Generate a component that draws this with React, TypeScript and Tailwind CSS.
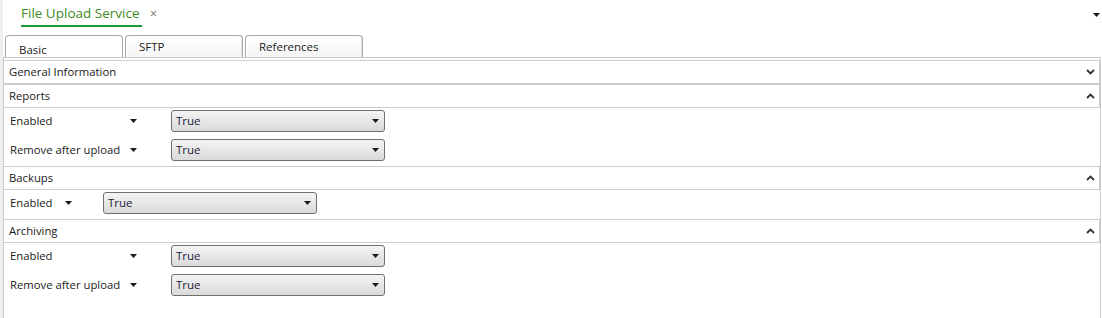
import React from 'react';

type Row = { label: string; value: string };
type Section = { title: string; open: boolean; labelW: string; caretW: string; rows: Row[] };

const sections: Section[] = [
  { title: 'General Information', open: false, labelW: 'w-[120px]', caretW: 'w-[41px]', rows: [] },
  {
    title: 'Reports', open: true, labelW: 'w-[120px]', caretW: 'w-[41px]',
    rows: [{ label: 'Enabled', value: 'True' }, { label: 'Remove after upload', value: 'True' }],
  },
  { title: 'Backups', open: true, labelW: 'w-[55px]', caretW: 'w-[38px]', rows: [{ label: 'Enabled', value: 'True' }] },
  {
    title: 'Archiving', open: true, labelW: 'w-[120px]', caretW: 'w-[41px]',
    rows: [{ label: 'Enabled', value: 'True' }, { label: 'Remove after upload', value: 'True' }],
  },
];

const Caret = () => (
  <svg width="7" height="4" viewBox="0 0 7 4" className="shrink-0">
    <path d="M0 0h7L3.5 4z" fill="#1a1a1a" />
  </svg>
);

const Chevron = ({ up }: { up: boolean }) => (
  <svg width="9" height="6" viewBox="0 0 9 6">
    <path d={up ? 'M1 5L4.5 1.5 8 5' : 'M1 1l3.5 3.5L8 1'} fill="none" stroke="#333" strokeWidth="1.8" />
  </svg>
);

function Select({ value }: { value: string }) {
  return (
    <div className="w-[214px] h-[22px] rounded-[3px] border border-[#707070] bg-gradient-to-b from-[#f4f4f4] to-[#dadada] flex items-center justify-between pl-[4px] pr-[5px]">
      <span className="text-[11.5px] text-[#1c1c3c]">{value}</span>
      <Caret />
    </div>
  );
}

export default function App() {
  return (
    <div className="w-[1102px] h-[318px] bg-white flex font-['Open_Sans',sans-serif] text-[#1a1a1a] overflow-hidden">
      <div className="w-[3px] bg-[#eeeeee] shrink-0" />
      <div className="flex-1 flex flex-col">
        {/* document tab bar */}
        <div className="h-[35px] flex items-start justify-between pr-[2px]">
          <div className="ml-[18px] mt-[4px] flex items-start gap-[8px]">
            <div className="flex flex-col">
              <span className="text-[13.5px] leading-[19px] text-[#3f8a1c]">File Upload Service</span>
              <div className="h-[2px] mt-[2px] w-[121px] bg-[#1c9636]" />
            </div>
            <span className="text-[12px] leading-[19px] text-[#666]">×</span>
          </div>
          <div className="mt-[13px]"><Caret /></div>
        </div>

        {/* tabs */}
        <div className="h-[22px] flex gap-[2px] pl-[2px]">
          {['Basic', 'SFTP', 'References'].map((t, i) => (
            <div
              key={t}
              className={`w-[118px] h-[22px] rounded-t-[4px] border border-b-0 border-[#a8a8a8] text-[11.5px] pl-[13px] ${
                i === 0 ? 'bg-white pt-[5px]' : 'bg-gradient-to-b from-white to-[#f4f4f4] pt-[2px] shadow-[inset_1px_1px_0_#fff,inset_-1px_0_0_#e4e4e4]'
              }`}
            >
              {t}
            </div>
          ))}
        </div>

        {/* content */}
        <div className="flex-1 border-t border-l border-r border-[#cbcbcb] mr-[1px] pt-[2px]">
          {sections.map((s) => (
            <div key={s.title}>
              <div className="h-[24px] border border-l-0 border-[#cdcdcd] flex items-center justify-between pl-[5px] pr-[4px]">
                <span className="text-[11.3px]">{s.title}</span>
                <Chevron up={s.open} />
              </div>
              {s.rows.length > 0 && (
                <div className="pt-[2px] pb-[5px] flex flex-col gap-[7px]">
                  {s.rows.map((r, i) => (
                    <div key={i} className="h-[22px] flex items-center pl-[6px]">
                      <span className={`${s.labelW} text-[11.3px] shrink-0`}>{r.label}</span>
                      <div className={`${s.caretW} shrink-0`}><Caret /></div>
                      <Select value={r.value} />
                    </div>
                  ))}
                </div>
              )}
            </div>
          ))}
        </div>
      </div>
    </div>
  );
}
